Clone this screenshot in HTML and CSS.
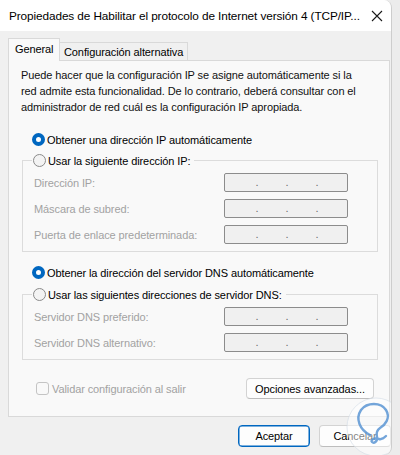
FILE: index.html
```html
<!DOCTYPE html>
<html lang="es">
<head>
<meta charset="utf-8">
<title>Propiedades TCP/IPv4</title>
<link rel="stylesheet" href="styles.css">
</head>
<body>
<div class="window">
  <div class="titlebar">
    <span class="title">Propiedades de Habilitar el protocolo de Internet versión 4 (TCP/IP...</span>
    <svg class="close" width="12" height="12" viewBox="0 0 12 12"><path d="M1 1 L11 11 M11 1 L1 11" stroke="#1a1a1a" stroke-width="1.1" fill="none"/></svg>
  </div>
  <div class="content">
    <div class="tabs">
      <div class="tab active">General</div>
      <div class="tab">Configuración alternativa</div>
    </div>
    <div class="panel">
      <p class="desc">Puede hacer que la configuración IP se asigne automáticamente si la red admite esta funcionalidad. De lo contrario, deberá consultar con el administrador de red cuál es la configuración IP apropiada.</p>

      <div class="radio-row first"><span class="radio on"></span><span>Obtener una dirección IP automáticamente</span></div>

      <div class="group g1">
        <div class="legend"><span class="radio"></span><span>Usar la siguiente dirección IP:</span></div>
        <div class="field"><span class="lbl">Dirección IP:</span><span class="ip"><i>.</i><i>.</i><i>.</i></span></div>
        <div class="field"><span class="lbl">Máscara de subred:</span><span class="ip"><i>.</i><i>.</i><i>.</i></span></div>
        <div class="field"><span class="lbl">Puerta de enlace predeterminada:</span><span class="ip"><i>.</i><i>.</i><i>.</i></span></div>
      </div>

      <div class="radio-row second"><span class="radio on"></span><span>Obtener la dirección del servidor DNS automáticamente</span></div>

      <div class="group g2">
        <div class="legend"><span class="radio"></span><span>Usar las siguientes direcciones de servidor DNS:</span></div>
        <div class="field"><span class="lbl">Servidor DNS preferido:</span><span class="ip"><i>.</i><i>.</i><i>.</i></span></div>
        <div class="field"><span class="lbl">Servidor DNS alternativo:</span><span class="ip"><i>.</i><i>.</i><i>.</i></span></div>
      </div>

      <div class="bottom-row">
        <label class="check"><span class="box"></span><span>Validar configuración al salir</span></label>
        <button class="btn adv">Opciones avanzadas...</button>
      </div>
    </div>
    <div class="footer">
      <button class="btn default">Aceptar</button>
      <button class="btn cancel">Cancelar</button>
    </div>
  </div>
  <svg class="watermark" width="60" height="60" viewBox="0 0 60 60">
    <circle cx="30" cy="30" r="29" fill="rgba(255,255,255,0.5)" stroke="rgba(210,220,230,0.6)" stroke-width="1"/>
    <path d="M24 38 C14 33 9 22 15 13 C21 5 35 5 40 13 C45 21 39 28 34 31 C31 33 30 36 31 40 C32 44 28 47 26 45 C24 43 29 40 33 42 C36 43 38 41 40 39" fill="none" stroke="#5b95d3" stroke-opacity="0.85" stroke-width="2.4" stroke-linecap="round" stroke-linejoin="round"/>
  </svg>
</div>
</body>
</html>
```

FILE: styles.css
```css
* { box-sizing: border-box; }

html, body {
  margin: 0;
  padding: 0;
}

body {
  background: #ececec;
  font-family: "Liberation Sans", Arial, sans-serif;
  font-size: 11px;
  letter-spacing: -0.1px;
  color: #000;
  width: 400px;
  height: 455px;
  overflow: hidden;
}

.window {
  position: relative;
  width: 392px;
  height: 455px;
  background: #f0f0f0;
  border-right: 1px solid #cdcdcd;
  border-radius: 0 8px 8px 0;
  overflow: hidden;
}

.titlebar {
  height: 31px;
  background: #ffffff;
  display: flex;
  align-items: center;
  justify-content: space-between;
  padding: 0 8px 0 9px;
}

.title {
  font-size: 11.8px;
  color: #000;
  white-space: nowrap;
}

.close { display: block; }

.content {
  padding: 7px 0 0 8px;
}

.tabs {
  display: flex;
  align-items: flex-end;
  height: 22px;
}

.tab {
  height: 18px;
  padding: 0 4px 0 4px;
  border: 1px solid #d9d9d9;
  border-bottom: none;
  border-left: none;
  background: #f0f0f0;
  line-height: 18px;
  white-space: nowrap;
}

.tab.active {
  position: relative;
  z-index: 1;
  height: 23px;
  margin-bottom: -1px;
  width: 52px;
  padding: 0 0 0 6px;
  border-left: 1px solid #d9d9d9;
  background: #f9f9f9;
  line-height: 21px;
}

.panel {
  width: 382px;
  height: 357px;
  background: #f9f9f9;
  border: 1px solid #d9d9d9;
  padding: 6px 15px 0 12px;
}

.desc {
  margin: 0;
  max-width: 346px;
  line-height: 16px;
  color: #111;
}

.radio-row {
  display: flex;
  align-items: center;
  gap: 2px;
  height: 17px;
  margin-left: 11px;
  white-space: nowrap;
}

.radio-row.first { margin-top: 16px; }
.radio-row.second { margin-top: 12px; }

.radio {
  display: inline-block;
  width: 13px;
  height: 13px;
  border-radius: 50%;
  border: 1px solid #8a8a8a;
  background: #f3f3f3;
  flex: none;
}

.radio.on {
  border: 4px solid #0067c0;
  background: #ffffff;
}

.group {
  width: 356px;
  margin-left: 1px;
  border: 1px solid #dcdcdc;
  padding: 0 29px 7px 11px;
}

.g1 { margin-top: 12px; }
.g2 { margin-top: 13px; }

.legend {
  display: flex;
  align-items: center;
  gap: 2px;
  width: fit-content;
  height: 17px;
  margin: -9px 0 4px -2px;
  padding: 0 4px 0 1px;
  background: #f9f9f9;
  white-space: nowrap;
}

.field {
  display: flex;
  align-items: center;
  justify-content: space-between;
  height: 19px;
  margin-bottom: 7px;
}

.field:last-child { margin-bottom: 0; }

.lbl {
  color: #a2a2a2;
  white-space: nowrap;
}

.ip {
  display: flex;
  justify-content: center;
  width: 124px;
  height: 19px;
  padding-left: 2px;
  border: 1px solid #8c8c8c;
  border-radius: 2px;
  background: #f0f0f0;
}

.ip i {
  font-style: normal;
  width: 30px;
  text-align: center;
  line-height: 16px;
  color: #6b6b6b;
}

.bottom-row {
  display: flex;
  align-items: center;
  justify-content: space-between;
  height: 21px;
  margin-top: 18px;
  padding-left: 15px;
}

.check {
  display: flex;
  align-items: center;
  gap: 3px;
  color: #a2a2a2;
}

.box {
  display: inline-block;
  width: 13px;
  height: 13px;
  border: 1px solid #c4c4c4;
  border-radius: 3px;
  background: #f9f9f9;
}

.btn {
  font-family: inherit;
  font-size: 11px;
  letter-spacing: -0.1px;
  color: #000;
  background: #fdfdfd;
  border: 1px solid #d3d3d3;
  border-bottom-color: #bdbdbd;
  border-radius: 4px;
  padding: 0;
  height: 21px;
  cursor: default;
}

.adv { width: 128px; }

.footer {
  display: flex;
  justify-content: flex-end;
  gap: 9px;
  margin-top: 8px;
}

.btn.default {
  width: 72px;
  height: 22px;
  border: 1px solid #0067c0;
  box-shadow: inset 0 0 0 0.5px #0067c0;
}

.btn.cancel {
  width: 72px;
  height: 22px;
}

.watermark {
  position: absolute;
  left: 346px;
  top: 397px;
}
```
